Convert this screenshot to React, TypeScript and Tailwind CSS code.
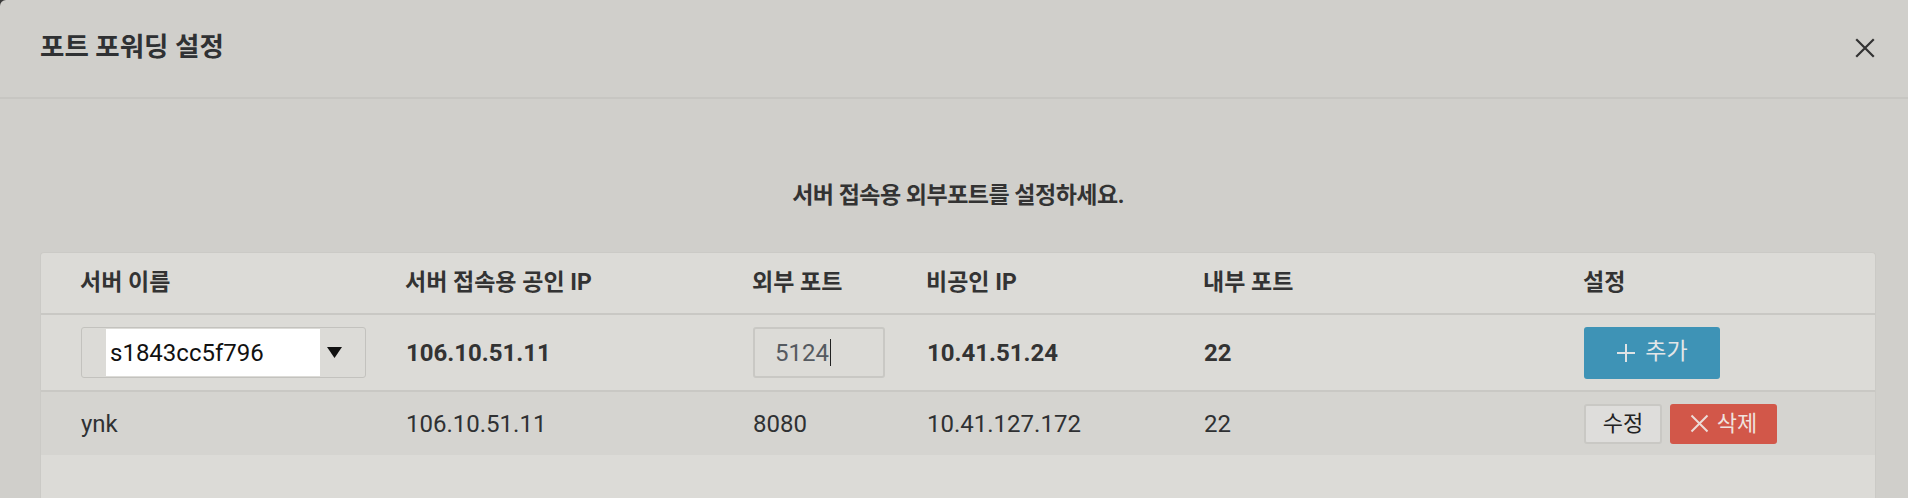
import React from "react";

const font = { fontFamily: 'Roboto, "Noto Sans CJK KR", sans-serif' };

function CloseIcon() {
  return (
    <svg width="20" height="20" viewBox="0 0 20 20" className="block">
      <path d="M2 2 L18 18 M18 2 L2 18" stroke="#333" strokeWidth="2.2" strokeLinecap="square" />
    </svg>
  );
}

function PlusIcon() {
  return (
    <svg width="20" height="20" viewBox="0 0 20 20" className="block">
      <path d="M10 1 V19 M1 10 H19" stroke="#dfe3e5" strokeWidth="2" />
    </svg>
  );
}

function XIcon() {
  return (
    <svg width="19" height="19" viewBox="0 0 19 19" className="block">
      <path d="M1.5 1.5 L17.5 17.5 M17.5 1.5 L1.5 17.5" stroke="#ecdcd8" strokeWidth="2" />
    </svg>
  );
}

export default function App() {
  return (
    <div className="w-[1908px] h-[498px] bg-[#3a3a3a] overflow-hidden" style={font}>
      <div className="w-full h-full bg-[#d0cfcb] rounded-tl-[6px] flex flex-col">
        {/* Header */}
        <div className="h-[99px] shrink-0 border-b-2 border-[#c7c6c2] flex items-center justify-between pl-10 pr-[33px]">
          <h1 className="text-[26.5px] font-bold text-[#2f3133] leading-none pb-[2px]">포트 포워딩 설정</h1>
          <button className="pb-[1px]"><CloseIcon /></button>
        </div>
        {/* Body */}
        <div className="flex-1 pl-10 pr-8 pt-[79px]">
          <p className="text-center text-[23px] font-bold text-[#333] leading-[36px] tracking-[-0.5px]">
            서버 접속용 외부포트를 설정하세요.
          </p>
          <div className="mt-[38px] bg-[#dcdbd7] rounded-t-[4px] border border-[#cbcac6] border-b-0 h-[260px] overflow-hidden">
            {/* header row */}
            <div className="grid grid-cols-[325px_347px_174px_277px_380px_1fr] h-[62px] items-center border-b-2 border-[#c9c8c4] text-[23px] font-bold text-[#333] pl-[39px]">
              <div>서버 이름</div>
              <div>서버 접속용 공인 IP</div>
              <div>외부 포트</div>
              <div>비공인 IP</div>
              <div>내부 포트</div>
              <div>설정</div>
            </div>
            {/* input row */}
            <div className="grid grid-cols-[325px_347px_174px_277px_380px_1fr] h-[77px] items-center border-b-2 border-[#c9c8c4] text-[24px] text-[#333] pl-[40px] shadow-[0_1px_1px_rgba(0,0,0,0.04)]">
              <div>
                <div className="w-[285px] h-[51px] border border-[#c3c2be] rounded-[3px] flex items-center">
                  <div className="w-[24px]" />
                  <div className="w-[214px] h-[47px] bg-white flex items-center pl-[4px] text-[24px] text-[#111]">s1843cc5f796</div>
                  <div className="flex-1 flex items-center pl-[7px]">
                    <svg width="15" height="11" viewBox="0 0 15 11" className="block">
                      <polygon points="0,0 15,0 7.5,11" fill="#111" />
                    </svg>
                  </div>
                </div>
              </div>
              <div className="font-bold">106.10.51.11</div>
              <div>
                <div className="w-[132px] h-[51px] border-2 border-[#c9c8c4] rounded-[3px] flex items-center pl-[20px] text-[#555a60]">
                  5124<span className="inline-block w-px h-[27px] bg-[#222] ml-px" />
                </div>
              </div>
              <div className="font-bold">10.41.51.24</div>
              <div className="font-bold">22</div>
              <div>
                <button className="w-[136px] h-[52px] bg-[#3e93b6] rounded-[3px] flex items-center justify-center gap-[9px] text-[23px] text-[#e3e6e8]">
                  <PlusIcon />
                  <span>추가</span>
                </button>
              </div>
            </div>
            {/* data row */}
            <div className="grid grid-cols-[325px_347px_174px_277px_380px_1fr] h-[63px] items-center bg-[#d5d4d0] text-[24px] text-[#2f3133] pl-[40px]">
              <div>ynk</div>
              <div>106.10.51.11</div>
              <div>8080</div>
              <div>10.41.127.172</div>
              <div>22</div>
              <div className="flex items-center gap-[8px]">
                <button className="w-[78px] h-[40px] border-2 border-[#c9c8c4] bg-[#dedddb] rounded-[3px] text-[22px] text-[#222] flex items-center justify-center">
                  수정
                </button>
                <button className="w-[107px] h-[40px] bg-[#d25749] rounded-[3px] text-[22px] text-[#f0e2de] flex items-center justify-center gap-[8px]">
                  <XIcon />
                  <span>삭제</span>
                </button>
              </div>
            </div>
          </div>
        </div>
      </div>
    </div>
  );
}
